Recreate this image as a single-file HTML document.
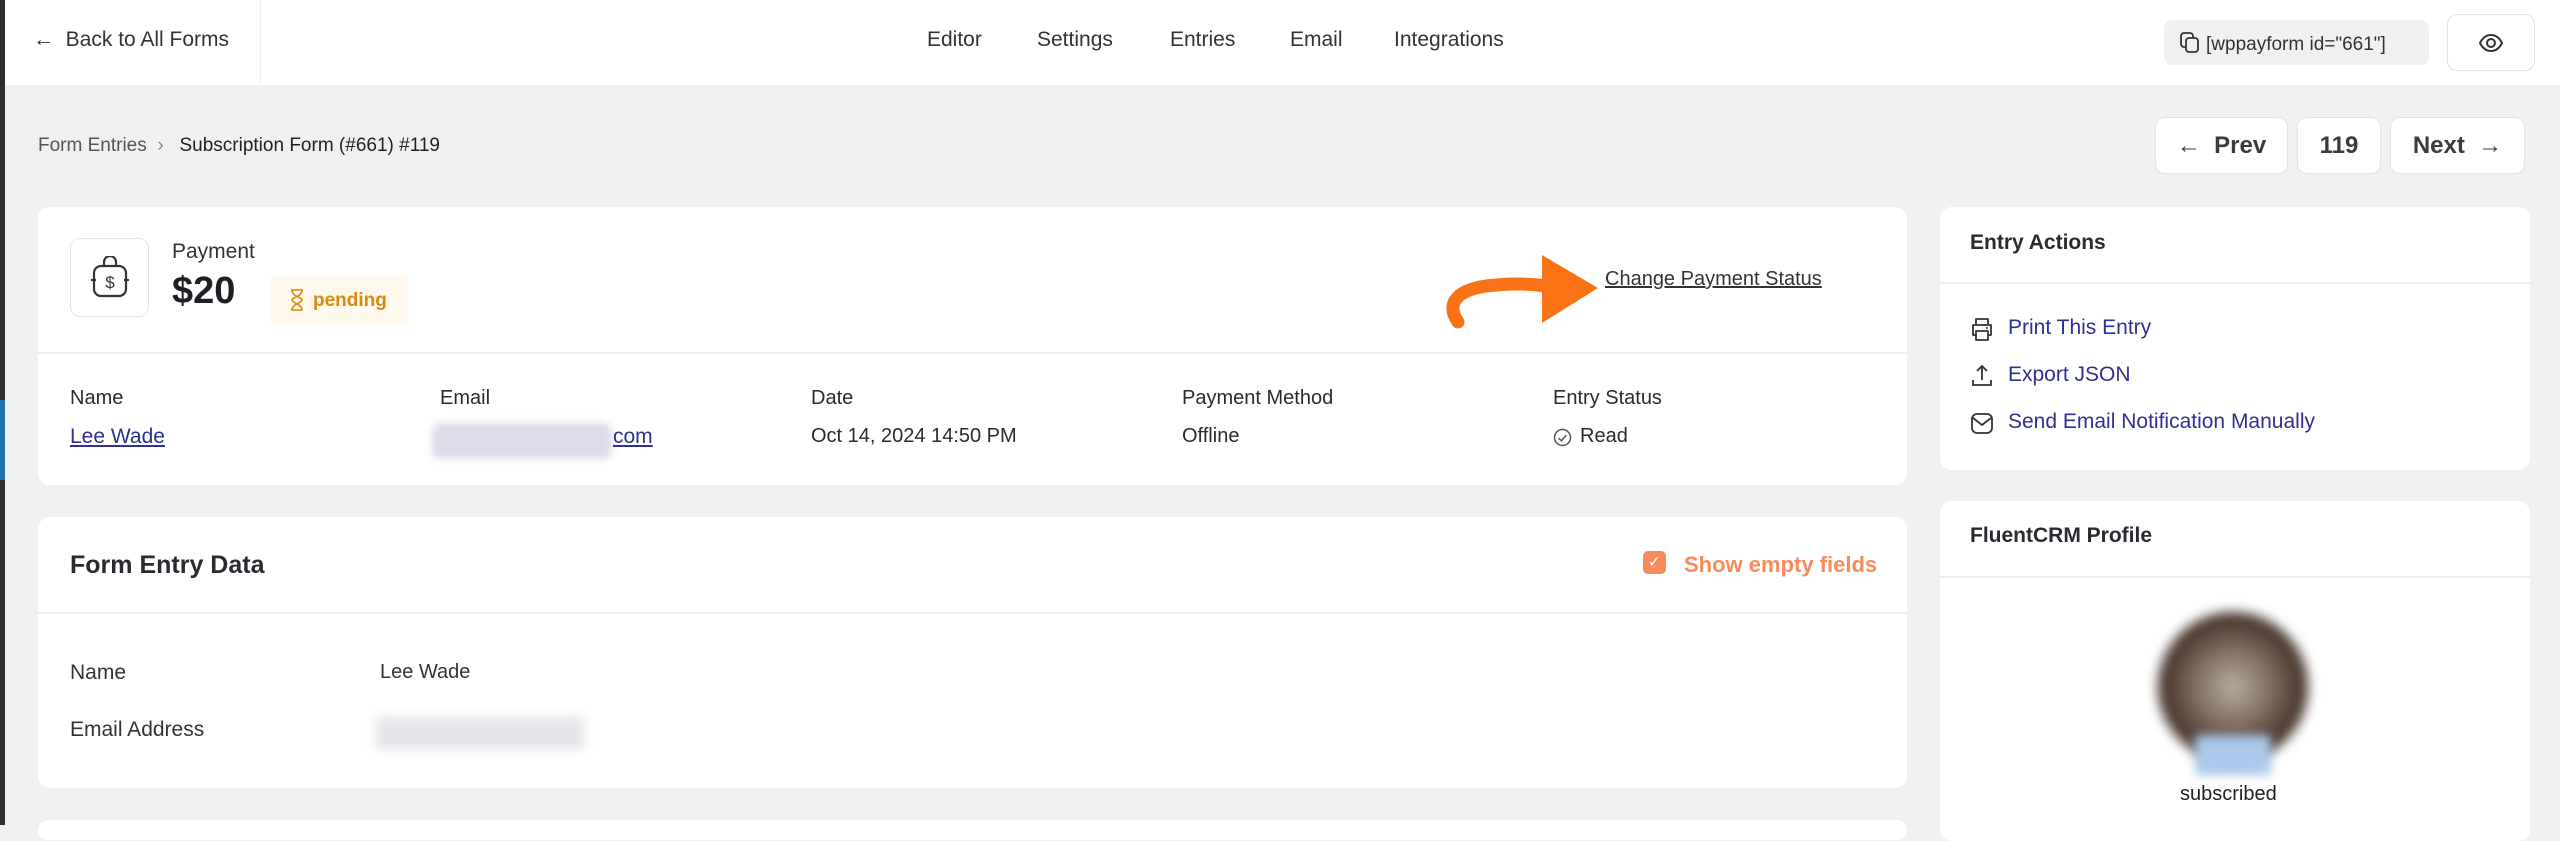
<!DOCTYPE html>
<html><head><meta charset="utf-8"><style>
*{box-sizing:border-box;margin:0;padding:0}
body{width:2560px;height:825px;overflow:hidden;background:#f0f0f1;font-family:"Liberation Sans",sans-serif;color:#1e1e24;position:relative}
.a{position:absolute;white-space:nowrap}
.card{position:absolute;background:#fff;border-radius:12px}
.hr{position:absolute;height:2px;background:#ececee}
.lbl{font-size:20px;color:#2a2a30}
.lnk{font-size:21px;color:#2e3192}
.btn{position:absolute;background:#fff;border:1px solid #e3e3e6;border-radius:10px;font-size:24px;font-weight:bold;color:#3a3a40;display:flex;align-items:center;justify-content:center}
.ic{position:absolute}
</style></head><body>
<div class="a" style="left:0;top:0;width:5px;height:825px;background:#2c2c30"></div>
<div class="a" style="left:0;top:400px;width:5px;height:80px;background:#2271b1"></div>
<div class="a" style="left:5px;top:0;width:2555px;height:85px;background:#fff"></div>
<div class="a" style="left:260px;top:0;width:1px;height:85px;background:#ececee"></div>
<div class="a" style="left:33px;top:28px;font-size:21px;color:#333">← &nbsp;Back to All Forms</div>
<div class="a" style="left:927px;top:28px;font-size:21px;color:#333">Editor</div>
<div class="a" style="left:1037px;top:28px;font-size:21px;color:#333">Settings</div>
<div class="a" style="left:1170px;top:28px;font-size:21px;color:#333">Entries</div>
<div class="a" style="left:1290px;top:28px;font-size:21px;color:#333">Email</div>
<div class="a" style="left:1394px;top:28px;font-size:21px;color:#333">Integrations</div>
<div class="a" style="left:2164px;top:20px;width:265px;height:45px;background:#eff0f2;border-radius:8px;font-size:19px;color:#333;padding:12px 0 0 16px"><svg width="20" height="22" viewBox="0 0 20 22" style="vertical-align:-4px;margin-right:6px"><rect x="1" y="1" width="12" height="14" rx="3" fill="none" stroke="#333" stroke-width="1.8"/><rect x="6" y="6" width="12" height="14" rx="3" fill="#eff0f2" stroke="#333" stroke-width="1.8"/></svg>[wppayform id="661"]</div>
<div class="a" style="left:2447px;top:14px;width:88px;height:57px;border:1px solid #e3e3e6;border-radius:10px;background:#fff"><svg width="26" height="20" viewBox="0 0 26 20" style="position:absolute;left:30px;top:18px"><path d="M2 10C5 4 9 2 13 2s8 2 11 8c-3 6-7 8-11 8S5 16 2 10z" fill="none" stroke="#333" stroke-width="2"/><circle cx="13" cy="10" r="4" fill="none" stroke="#333" stroke-width="2"/></svg></div>

<div class="a" style="left:38px;top:135px;font-size:19px;color:#555">Form Entries &nbsp;<span style="color:#888">›</span>&nbsp;&nbsp; <span style="color:#222">Subscription Form (#661) #119</span></div>
<div class="btn" style="left:2155px;top:117px;width:133px;height:57px">←&nbsp; Prev</div>
<div class="btn" style="left:2297px;top:117px;width:84px;height:57px">119</div>
<div class="btn" style="left:2390px;top:117px;width:135px;height:57px">Next &nbsp;→</div>

<div class="card" style="left:38px;top:207px;width:1869px;height:278px"></div>
<div class="hr" style="left:38px;top:352px;width:1869px"></div>
<div class="a" style="left:70px;top:238px;width:79px;height:79px;border:1px solid #e3e3e6;border-radius:10px"><svg width="40" height="44" viewBox="0 0 40 44" style="position:absolute;left:19px;top:17px"><path d="M14 10V6a6 6 0 0 1 12 0v4" fill="none" stroke="#333" stroke-width="2.2"/><rect x="4" y="10" width="32" height="30" rx="7" fill="none" stroke="#333" stroke-width="2.2"/><path d="M1 24h5M34 24h5" stroke="#333" stroke-width="2.2"/><text x="20" y="32" font-size="17" text-anchor="middle" font-family="Liberation Sans" fill="#333">$</text></svg></div>
<div class="a" style="left:172px;top:240px;font-size:21px;color:#333">Payment</div>
<div class="a" style="left:172px;top:270px;font-size:38px;font-weight:bold;color:#1e1e24">$20</div>
<div class="a" style="left:270px;top:276px;width:138px;height:49px;background:#fff8ec;border-radius:6px;font-size:19px;font-weight:bold;color:#d98a0c;padding:13px 0 0 20px"><svg width="14" height="22" viewBox="0 0 14 22" style="vertical-align:-5px;margin-right:9px"><path d="M1 1h12M1 21h12M2 1c0 7 10 7 10 10S2 15 2 21M12 1c0 7-10 7-10 10s10 4 10 10" fill="none" stroke="#d98a0c" stroke-width="1.6"/></svg>pending</div>
<svg class="a" style="left:1436px;top:250px" width="170" height="80" viewBox="0 0 170 80"><path d="M22 72C10 55 18 38 60 35C80 33 95 34 110 36" fill="none" stroke="#f97316" stroke-width="13" stroke-linecap="round"/><path d="M106 5L162 38L106 73z" fill="#f97316"/></svg>
<div class="a" style="left:1605px;top:268px;font-size:20px;color:#333;text-decoration:underline">Change Payment Status</div>
<div class="a lbl" style="left:70px;top:387px">Name</div>
<div class="a lbl" style="left:440px;top:387px">Email</div>
<div class="a lbl" style="left:811px;top:387px">Date</div>
<div class="a lbl" style="left:1182px;top:387px">Payment Method</div>
<div class="a lbl" style="left:1553px;top:387px">Entry Status</div>
<div class="a" style="left:70px;top:425px;font-size:21px;color:#2e3192;text-decoration:underline">Lee Wade</div>
<div class="a" style="left:432px;top:423px;width:180px;height:36px;background:#dcdcea;border-radius:8px;filter:blur(4px)"></div>
<div class="a" style="left:613px;top:425px;font-size:21px;color:#2e3192;text-decoration:underline">com</div>
<div class="a lbl" style="left:811px;top:425px">Oct 14, 2024 14:50 PM</div>
<div class="a lbl" style="left:1182px;top:425px">Offline</div>
<svg class="ic" style="left:1553px;top:428px" width="19" height="19" viewBox="0 0 19 19"><circle cx="9.5" cy="9.5" r="8" fill="none" stroke="#555" stroke-width="1.5"/><path d="M5.5 10l2.8 2.8 5-5.5" fill="none" stroke="#555" stroke-width="1.5"/></svg>
<div class="a lbl" style="left:1580px;top:425px">Read</div>

<div class="card" style="left:1940px;top:207px;width:590px;height:263px"></div>
<div class="hr" style="left:1940px;top:282px;width:590px"></div>
<div class="a" style="left:1970px;top:231px;font-size:21px;font-weight:bold;color:#2a2a30">Entry Actions</div>
<svg class="ic" style="left:1970px;top:316px" width="24" height="26" viewBox="0 0 24 26"><path d="M6 8V3h12v5M6 19H3V9h18v10h-3M6 15h12v9H6z" fill="none" stroke="#333" stroke-width="1.8" stroke-linejoin="round"/><circle cx="17" cy="12" r="1" fill="#333"/></svg>
<div class="a lnk" style="left:2008px;top:316px">Print This Entry</div>
<svg class="ic" style="left:1970px;top:363px" width="24" height="26" viewBox="0 0 24 26"><path d="M12 17V3M7 8l5-5 5 5M3 17v5h18v-5" fill="none" stroke="#333" stroke-width="1.8"/></svg>
<div class="a lnk" style="left:2008px;top:363px">Export JSON</div>
<svg class="ic" style="left:1970px;top:410px" width="24" height="26" viewBox="0 0 24 26"><rect x="2" y="4" width="20" height="19" rx="5" fill="none" stroke="#333" stroke-width="1.8"/><path d="M3 8l9 7 9-7" fill="none" stroke="#333" stroke-width="1.8"/></svg>
<div class="a lnk" style="left:2008px;top:410px">Send Email Notification Manually</div>

<div class="card" style="left:38px;top:517px;width:1869px;height:271px"></div>
<div class="hr" style="left:38px;top:612px;width:1869px"></div>
<div class="a" style="left:70px;top:551px;font-size:25px;font-weight:bold;color:#2a2a30">Form Entry Data</div>
<div class="a" style="left:1643px;top:551px;width:23px;height:23px;background:#f78b5a;border-radius:5px;color:#fff;font-size:16px;text-align:center;line-height:23px">✓</div>
<div class="a" style="left:1684px;top:552px;font-size:22px;font-weight:bold;color:#f78b5a">Show empty fields</div>
<div class="a" style="left:70px;top:661px;font-size:21px;color:#333">Name</div>
<div class="a" style="left:380px;top:661px;font-size:20px;color:#333">Lee Wade</div>
<div class="a" style="left:70px;top:718px;font-size:21px;color:#333">Email Address</div>
<div class="a" style="left:375px;top:716px;width:210px;height:34px;background:#e6e6ea;border-radius:6px;filter:blur(5px)"></div>
<div class="card" style="left:38px;top:820px;width:1869px;height:20px"></div>

<div class="card" style="left:1940px;top:501px;width:590px;height:340px"></div>
<div class="hr" style="left:1940px;top:576px;width:590px"></div>
<div class="a" style="left:1970px;top:524px;font-size:21px;font-weight:bold;color:#2a2a30">FluentCRM Profile</div>
<div class="a" style="left:2158px;top:612px;width:150px;height:150px;border-radius:50%;background:radial-gradient(circle at 50% 50%,#b8aea0 0%,#7a6658 40%,#3e2c24 70%,#fff 100%);filter:blur(6px)"></div>
<div class="a" style="left:2195px;top:735px;width:76px;height:40px;background:#a9c8ea;filter:blur(5px)"></div>
<div class="a" style="left:2180px;top:783px;font-size:20px;color:#222">subscribed</div>
</body></html>
